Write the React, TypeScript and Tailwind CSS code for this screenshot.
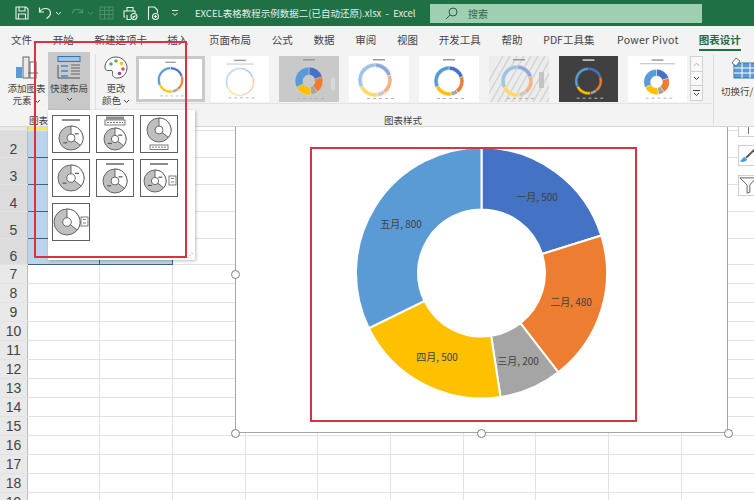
import React from "react";

const FONT = "font-['Noto_Sans_CJK_SC','Noto_Sans',sans-serif]";

function pt(cx: number, cy: number, r: number, deg: number): string {
  const a = (deg * Math.PI) / 180;
  return `${(cx + r * Math.sin(a)).toFixed(2)} ${(cy - r * Math.cos(a)).toFixed(2)}`;
}
function arc(cx: number, cy: number, r0: number, r1: number, a0: number, a1: number): string {
  const large = a1 - a0 > 180 ? 1 : 0;
  return `M${pt(cx, cy, r1, a0)}A${r1} ${r1} 0 ${large} 1 ${pt(cx, cy, r1, a1)}L${pt(cx, cy, r0, a1)}A${r0} ${r0} 0 ${large} 0 ${pt(cx, cy, r0, a0)}Z`;
}

const DATA = [500, 480, 200, 500, 800];
const TOTAL = DATA.reduce((a, b) => a + b, 0);
const COLORS = ["#4472c4", "#ed7d31", "#a5a5a5", "#ffc000", "#5b9bd5"];

function Slices(p: { cx: number; cy: number; r0: number; r1: number; gap: number; gapColor: string; colors?: string[] }) {
  let a = 0;
  return (
    <>
      {DATA.map((v, i) => {
        const s = a;
        a += (v / TOTAL) * 360;
        return (
          <path
            key={i}
            d={arc(p.cx, p.cy, p.r0, p.r1, s, a)}
            fill={(p.colors ?? COLORS)[i]}
            stroke={p.gapColor}
            strokeWidth={p.gap}
          />
        );
      })}
    </>
  );
}

function Thumb(p: { kind: number; cls: string }) {
  const k = p.kind;
  const faded = ["#8ea9db", "#f4b183", "#c9c9c9", "#ffd966", "#9dc3e6"];
  const light = ["#b4c7e7", "#f8cbad", "#dbdbdb", "#ffe699", "#bdd7ee"];
  const bars = k === 6 ? "#d9d9d9" : "#9a9a9a";
  return (
    <div className={p.cls}>
      <svg viewBox="0 0 60 46" className="w-full h-full">
        {k === 5 &&
          Array.from({ length: 14 }).map((_, i) => (
            <line key={i} x1={i * 7 - 12} y1={46} x2={i * 7 + 14} y2={0} stroke="#d4d4d4" strokeWidth={1.5} />
          ))}
        <rect x={24} y={3} width={12} height={1.5} fill={bars} />
        {k === 1 && <rect x={16} y={7} width={28} height={1} fill="#c4c4c4" />}
        {k === 7 && <rect x={12} y={7} width={36} height={1} fill="#bbbbbb" />}
        {k === 0 && <Slices cx={30} cy={24} r0={12} r1={15} gap={0.4} gapColor="#fff" />}
        {k === 1 && <Slices cx={30} cy={26} r0={13} r1={15} gap={0.4} gapColor="#fff" colors={light} />}
        {k === 2 && <Slices cx={30} cy={25} r0={6} r1={14} gap={0.4} gapColor="#ddd" />}
        {k === 3 && <Slices cx={26} cy={24} r0={13} r1={17} gap={0.4} gapColor="#fff" colors={faded} />}
        {k === 4 && <Slices cx={30} cy={25} r0={11} r1={15} gap={0.4} gapColor="#fff" />}
        {k === 5 && <Slices cx={28} cy={25} r0={12} r1={16} gap={0.4} gapColor="#eee" colors={faded} />}
        {k === 6 && <Slices cx={30} cy={25} r0={11} r1={14} gap={0.4} gapColor="#404040" />}
        {k === 7 && <Slices cx={29} cy={26} r0={6} r1={13} gap={0.4} gapColor="#fff" />}
        {k === 2 && <rect x={52} y={22} width={4} height={12} fill="#d8d8d8" />}
        {k === 5 && <rect x={50} y={16} width={5} height={16} fill="#c4c4c4" />}
        {[18, 24, 30, 36, 42].map((x) => (
          <rect key={x} x={x} y={42} width={3} height={1} fill={k === 6 ? "#bbbbbb" : "#b5b5b5"} />
        ))}
      </svg>
    </div>
  );
}

function LayoutIcon(p: {
  cx: number;
  cy: number;
  r: number;
  title?: "bar" | "box";
  legend?: "bottom" | "right";
  labels?: boolean;
}) {
  const { cx, cy, r } = p;
  const s = "#5a5a5a";
  return (
    <div className="w-[38px] h-[38px] border border-[#5f5f5f] bg-white">
      <svg viewBox="0 0 36 36" className="w-full h-full">
        {p.title === "bar" && <rect x={9} y={3} width={18} height={2} fill="#8c8c8c" />}
        {p.title === "box" && (
          <>
            <rect x={9} y={0.5} width={18} height={3} fill="#8c8c8c" />
            <rect x={8} y={4} width={20} height={5} fill="#fff" stroke={s} strokeWidth={0.8} />
            <line x1={10} y1={6.5} x2={26} y2={6.5} stroke={s} strokeWidth={0.8} strokeDasharray="2 1" />
          </>
        )}
        <circle cx={cx} cy={cy} r={r} fill="#bfbfbf" stroke={s} strokeWidth={0.9} />
        <path d={arc(cx, cy, 0.01, r, 0, 128)} fill="#fff" stroke={s} strokeWidth={0.9} />
        <circle cx={cx} cy={cy} r={r * 0.33} fill="#fff" stroke={s} strokeWidth={0.9} />
        {p.labels && (
          <>
            <rect x={cx + r * 0.3} y={cy - r * 0.4} width={4} height={1.2} fill={s} />
            <rect x={cx - r * 0.65} y={cy + r * 0.35} width={4} height={1.2} fill={s} />
          </>
        )}
        {p.legend === "bottom" && (
          <>
            <rect x={9} y={29} width={18} height={4.5} fill="#fff" stroke={s} strokeWidth={0.8} />
            <line x1={11} y1={31.2} x2={25} y2={31.2} stroke={s} strokeWidth={0.8} strokeDasharray="2 1" />
          </>
        )}
        {p.legend === "right" && (
          <>
            <rect x={28} y={cy - 5} width={7} height={9} fill="#fff" stroke={s} strokeWidth={0.8} />
            <line x1={30} y1={cy - 2.5} x2={33} y2={cy - 2.5} stroke={s} strokeWidth={0.8} />
            <line x1={30} y1={cy + 1} x2={33} y2={cy + 1} stroke={s} strokeWidth={0.8} />
          </>
        )}
      </svg>
    </div>
  );
}

function Chevron({ cls = "stroke-[#444]" }: { cls?: string }) {
  return (
    <svg width="7" height="5" viewBox="0 0 7 5" className={`inline-block ${cls}`} fill="none" strokeWidth="1">
      <path d="M1 1l2.5 2.5L6 1" />
    </svg>
  );
}

const TABS = [
  ["文件", "w-[21px]"],
  ["开始", "w-[21px]"],
  ["新建选项卡", "w-[52px]"],
  ["插入", "w-[21px]"],
  ["页面布局", "w-[42px]"],
  ["公式", "w-[21px]"],
  ["数据", "w-[21px]"],
  ["审阅", "w-[21px]"],
  ["视图", "w-[21px]"],
  ["开发工具", "w-[42px]"],
  ["帮助", "w-[21px]"],
  ["PDF工具集", "w-[52px]"],
  ["Power Pivot", "w-[60px]"],
];

const ROWS: { n: string; h: string; sel?: boolean }[] = [
  { n: "", h: "h-[4px]" },
  { n: "2", h: "h-[27px]", sel: true },
  { n: "3", h: "h-[27px]", sel: true },
  { n: "4", h: "h-[27px]", sel: true },
  { n: "5", h: "h-[27px]", sel: true },
  { n: "6", h: "h-[26px]", sel: true },
  ...Array.from({ length: 13 }).map((_, i) => ({ n: String(i + 7), h: "h-[19px]" })),
];

const COLS = ["w-[72px]", "w-[73px]", "w-[73px]", "w-[72px]", "w-[73px]", "w-[73px]", "w-[72px]", "w-[73px]", "w-[73px]"];

function Handle({ cls }: { cls: string }) {
  return <div className={`absolute w-[9px] h-[9px] rounded-full bg-white border border-[#7f7f7f] ${cls}`} />;
}

export default function App() {
  return (
    <div className={`relative w-[754px] h-[500px] overflow-hidden bg-white flex flex-col ${FONT}`}>
      {/* Title bar */}
      <div className="h-[26px] shrink-0 bg-[#1f7145] flex items-center text-[#e4efe8] text-[9.5px] pl-[15px]">
        <svg width="14" height="14" viewBox="0 0 14 14" fill="none" stroke="#e8f0ea" strokeWidth="1.1" className="shrink-0">
          <path d="M1 1h10l2 2v10H1z" />
          <path d="M4 1v4h6V1M3.5 13V8h7v5" />
        </svg>
        <svg width="14" height="14" viewBox="0 0 14 14" fill="none" stroke="#e8f0ea" strokeWidth="1.2" className="ml-[9px] shrink-0">
          <path d="M1.5 1.5v4.5h4.5M1.5 6C3 3.5 5 2.5 7.5 2.5c3 0 5 2 5 4.5 0 2.5-1.5 4-4 5.5" />
        </svg>
        <span className="ml-[3px] flex"><Chevron cls="stroke-[#e8f0ea]" /></span>
        <svg width="13" height="13" viewBox="0 0 14 14" fill="none" stroke="#4f8f6c" strokeWidth="1.2" className="ml-[9px] shrink-0">
          <path d="M12.5 1.5v4.5H8M12.5 6C11 3.5 9 2.5 6.500 2.500c-3 0-5 2-5 4.500" />
        </svg>
        <span className="ml-[3px] flex"><Chevron cls="stroke-[#4f8f6c]" /></span>
        <svg width="15" height="14" viewBox="0 0 15 14" fill="none" stroke="#4f8f6c" strokeWidth="1" className="ml-[5px] shrink-0">
          <path d="M1 1h13v12H1zM1 4.500h13M1 8.500h13M5.500 1v12M10 1v12" />
        </svg>
        <svg width="15" height="15" viewBox="0 0 15 15" fill="none" stroke="#e8f0ea" strokeWidth="1.1" className="ml-[9px] shrink-0">
          <path d="M4 5V1.500h6V5M2 11H1V5h11v2M4 9v4.500h4" />
          <circle cx="11" cy="10.500" r="3" />
          <path d="M9.500 10.500l1 1 2-2" />
        </svg>
        <svg width="13" height="15" viewBox="0 0 13 15" fill="none" stroke="#e8f0ea" strokeWidth="1.1" className="ml-[9px] shrink-0">
          <path d="M1.500 14V1h6l3 3v3" />
          <circle cx="8.500" cy="10.500" r="3" />
          <path d="M8.500 9v3M7 10.500h3" />
        </svg>
        <svg width="8" height="8" viewBox="0 0 8 8" fill="none" stroke="#e8f0ea" strokeWidth="1" className="ml-[11px] shrink-0">
          <path d="M1 1.500h6M1.500 4l2.500 2.500L6.500 4" />
        </svg>
        <span className="ml-[16px] whitespace-nowrap w-[222px] shrink-0">EXCEL表格教程示例数据二(已自动还原).xlsx&nbsp; - &nbsp;Excel</span>
        <div className="ml-[13px] w-[272px] h-[19px] shrink-0 bg-[#9dcfb0] flex items-center pl-[15px] text-[#35624a] text-[10px]">
          <svg width="13" height="13" viewBox="0 0 13 13" fill="none" stroke="#2f5f46" strokeWidth="1">
            <circle cx="8" cy="5" r="4" />
            <path d="M5 8l-4 4" />
          </svg>
          <span className="ml-[10px]">搜索</span>
        </div>
      </div>

      {/* Tabs */}
      <div className="h-[28px] shrink-0 bg-[#f3f3f3] flex items-center pl-[11px] gap-[20.75px] text-[10.5px] text-[#444]">
        {TABS.map(([t, w]) => (
          <span key={t} className={`${w} whitespace-nowrap ${t === "Power Pivot" ? "tracking-[0.3px] ml-[1px]" : ""}`}>
            {t}
          </span>
        ))}
        <span className="relative whitespace-nowrap font-bold text-[#1f6b43] w-[42px] ml-[1px]">
          图表设计
          <span className="absolute left-0 right-0 top-[17px] h-[2px] bg-[#1f7145]" />
        </span>
      </div>

      {/* Ribbon */}
      <div className="h-[73px] shrink-0 bg-[#f3f3f3] border-b border-[#d6d6d6] flex text-[#444] text-[9.5px] leading-[12px] relative z-10">
        <div className="ml-[8px] w-[37px] flex flex-col items-center pt-[1px]">
          <svg width="24" height="24" viewBox="0 0 24 24">
            <rect x="1" y="12" width="6" height="11" fill="#5b9bd5" />
            <rect x="8" y="2" width="6" height="21" fill="#e8e8e8" stroke="#666" strokeWidth="1" />
            <rect x="15" y="7" width="6" height="16" fill="#fff" stroke="#666" strokeWidth="1" />
            <path d="M13 18h10" stroke="#666" />
          </svg>
          <span className="mt-[3px] whitespace-nowrap">添加图表</span>
          <span className="whitespace-nowrap">元素<span className="ml-[2px]"><Chevron /></span></span>
        </div>
        <div className="ml-[3px] w-[42px] h-[58px] -mt-[2px] bg-[#c8c8c8] flex flex-col items-center pt-[4px]">
          <svg width="24" height="23" viewBox="0 0 24 23" fill="none">
            <rect x="1" y="0.500" width="22" height="5" fill="#9dc3e6" stroke="#2e75b6" />
            <path d="M1 9v13M1 22h22" stroke="#555" />
            <path d="M4 9h7v2H4zM4 14h7v2H4zM4 19h7v2H4z" fill="#5b9bd5" />
            <path d="M14 9h9M14 12h9M14 15h9M14 18h9" stroke="#666" />
          </svg>
          <span className="mt-[3px] whitespace-nowrap">快速布局</span>
          <span className="flex mt-[3px]"><Chevron /></span>
        </div>
        <div className="ml-[5px] w-[41px] flex flex-col items-center pt-[2px] border-l border-[#e0e0e0]">
          <svg width="24" height="23" viewBox="0 0 24 23" fill="none">
            <path d="M12 1C5 1 1 6 1 11c0 3 2 4 4 3.500 3-.8 4 .5 3.500 3-.4 3 2 4.500 5 4.500 6 0 9.500-5 9.500-10.500S18 1 12 1z" fill="#fff" stroke="#555" />
            <circle cx="7" cy="8" r="1.800" fill="#5b9bd5" />
            <circle cx="12" cy="5" r="1.800" fill="#70ad47" />
            <circle cx="17.500" cy="7.500" r="1.800" fill="#ffc000" />
            <circle cx="19" cy="13" r="1.800" fill="#e05050" />
            <circle cx="15.500" cy="17.500" r="1.800" fill="#a040a0" />
          </svg>
          <span className="mt-[3px] whitespace-nowrap">更改</span>
          <span className="whitespace-nowrap">颜色<span className="ml-[2px]"><Chevron /></span></span>
        </div>
        {/* Gallery */}
        <div className="flex flex-col w-[576px]">
          <div className="flex items-start h-[50px] pt-[2px] border-b border-[#e2e2e2]">
            <div className="w-[69px] h-[46px] border-[3px] border-[#c9c9c9] bg-white mr-[-4px]">
              <Thumb kind={0} cls="w-full h-full" />
            </div>
            <div className="flex gap-[10px] ml-[10px]">
              <Thumb kind={1} cls="w-[58px] h-[46px] bg-white" />
              <Thumb kind={2} cls="w-[60px] h-[46px] bg-[#c9c9c9]" />
              <Thumb kind={3} cls="w-[60px] h-[46px] bg-white" />
              <Thumb kind={4} cls="w-[60px] h-[46px] bg-white" />
              <Thumb kind={5} cls="w-[60px] h-[46px] bg-[#ececec]" />
              <Thumb kind={6} cls="w-[59px] h-[46px] bg-[#404040]" />
              <Thumb kind={7} cls="w-[59px] h-[46px] bg-white" />
            </div>
            <div className="ml-[3px] w-[13px] h-[45px] flex flex-col border border-[#d0d0d0] bg-[#f8f8f8] text-[8px]">
              <div className="flex-1 flex items-center justify-center rotate-180"><Chevron cls="stroke-[#aaa]" /></div>
              <div className="flex-1 flex items-center justify-center border-y border-[#d0d0d0]"><Chevron /></div>
              <div className="flex-1 flex flex-col items-center justify-center">
                <span className="w-[7px] h-px bg-[#444] mb-[1px]" />
                <Chevron />
              </div>
            </div>
          </div>
          <div className="pl-[248px] pt-[10px] whitespace-nowrap">图表样式</div>
        </div>
        <div className="ml-[1px] border-l border-[#dcdcdc] flex-1 flex flex-col pl-[7px] pt-[3px] overflow-hidden h-[71px]">
          <svg width="28" height="22" viewBox="0 0 28 22" fill="none" className="ml-[9px] shrink-0">
            <rect x="4" y="6" width="24" height="15" fill="#5b9bd5" stroke="#2e75b6" />
            <path d="M4 11h24M4 16h24M12 6v15M20 6v15" stroke="#fff" />
            <path d="M6 1l4 3-4 5-4-3z" fill="#fff" stroke="#555" strokeWidth="0.8" />
          </svg>
          <span className="mt-[6px] whitespace-nowrap">切换行/列</span>
        </div>
        {/* Group caption, mostly hidden by the open menu */}
        <span className="absolute left-[29px] top-[60px] whitespace-nowrap">图表布局</span>
      </div>

      {/* Sheet */}
      <div className="relative flex-1 min-h-0 overflow-hidden">
        {ROWS.map((r, ri) => (
          <div key={ri} className={`flex ${r.h} border-b border-[#e2e2e2]`}>
            <div className={`w-[28px] shrink-0 flex justify-center font-['Liberation_Sans',sans-serif] text-[14px] leading-[16px] text-[#444] border-r border-[#bbb] ${r.sel ? "items-end bg-[#dcdcdc]" : "items-center bg-[#e9e9e9]"}`}>
              {r.n}
            </div>
            {COLS.map((c, ci) => {
              const sel = r.sel && ci < 2;
              const yellow = ri === 0 && ci === 0;
              return (
                <div
                  key={ci}
                  className={`${c} shrink-0 border-r ${sel ? "bg-[#bcd3ec] border-[#3f5f85]" : "border-[#e2e2e2]"} ${yellow ? "bg-[#f2f23c]" : ""}`}
                />
              );
            })}
          </div>
        ))}
        <div className="absolute left-[28px] top-[137px] w-[145px] h-px bg-[#3f5f85]" />
        <div className="absolute left-[28px] top-[30px] w-[72px] h-px bg-[#3f5f85]" />
        <div className="absolute left-[28px] top-[57px] w-[72px] h-px bg-[#3f5f85]" />
        <div className="absolute left-[28px] top-[84px] w-[72px] h-px bg-[#3f5f85]" />
        <div className="absolute left-[28px] top-[111px] w-[72px] h-px bg-[#3f5f85]" />

        {/* Chart */}
        <div className="absolute left-[235px] top-0 w-[493px] h-[306px] bg-white border border-t-0 border-[#a6a6a6]">
          <svg viewBox="0 0 493 306" className="absolute left-[-1px] top-0 w-[493px] h-[306px]">
            <Slices cx={246.5} cy={146} r0={63.500} r1={125.500} gap={2} gapColor="#fff" />
            <g fontSize="10" fill="#404040" textAnchor="middle" fontFamily="'Noto Sans CJK SC','Liberation Sans',sans-serif">
              <text x={302} y={74}>一月, 500</text>
              <text x={336} y={179}>二月, 480</text>
              <text x={283} y={238}>三月, 200</text>
              <text x={202} y={234}>四月, 500</text>
              <text x={166} y={101}>五月, 800</text>
            </g>
          </svg>
          <div className="absolute left-[74px] top-[20px] w-[327px] h-[275px] border-2 border-[#d8343f]" />
        </div>
        <Handle cls="left-[231px] top-[143px]" />
        <Handle cls="left-[231px] top-[302px]" />
        <Handle cls="left-[477px] top-[302px]" />
        <Handle cls="left-[724px] top-[302px]" />

        {/* Chart side buttons */}
        <div className="absolute left-[738px] top-0 w-[20px] h-[10px] bg-white border border-t-0 border-[#cfcfcf] flex justify-center">
          <span className="w-px h-[7px] bg-[#777]" />
        </div>
        <div className="absolute left-[738px] top-[18px] w-[20px] h-[21px] bg-white border border-[#cfcfcf]">
          <svg viewBox="0 0 20 21" className="w-full h-full" fill="none">
            <path d="M1 17c2-1 3-4 5-5l3 3c-1 2-5 4-8 2z" fill="#4a9edd" />
            <path d="M8 13L18 3" stroke="#555" strokeWidth="2" />
          </svg>
        </div>
        <div className="absolute left-[738px] top-[48px] w-[20px] h-[21px] bg-white border border-[#cfcfcf]">
          <svg viewBox="0 0 20 21" className="w-full h-full" fill="none" stroke="#555" strokeWidth="1">
            <path d="M1 2h18l-7 8v8l-3 1v-9z" />
          </svg>
        </div>
      </div>

      {/* Quick layout dropdown */}
      <div className="absolute left-[48px] top-[110px] w-[147px] h-[150px] z-20 bg-white shadow-[1px_1px_3px_rgba(0,0,0,0.25)] pl-[4px] pt-[5px]">
        <div className="grid grid-cols-[38px_38px_38px] gap-x-[6px] gap-y-[6px]">
          <LayoutIcon cx={18} cy={22} r={12} title="bar" labels />
          <LayoutIcon cx={18} cy={23} r={11} title="box" labels />
          <LayoutIcon cx={18} cy={14} r={12} legend="bottom" />
          <LayoutIcon cx={18} cy={18} r={13} labels />
          <LayoutIcon cx={18} cy={21} r={12} title="bar" labels />
          <LayoutIcon cx={14} cy={21} r={11} title="bar" legend="right" labels />
          <LayoutIcon cx={14} cy={18} r={13} legend="right" />
        </div>
        <span className="absolute right-[2px] bottom-[2px] text-[6px] leading-none text-[#888]">⋰</span>
      </div>

      {/* Annotation box over the ribbon */}
      <div className="absolute left-[34px] top-[41px] w-[153px] h-[217px] z-30 border-2 border-[#d8343f] pointer-events-none" />
    </div>
  );
}
